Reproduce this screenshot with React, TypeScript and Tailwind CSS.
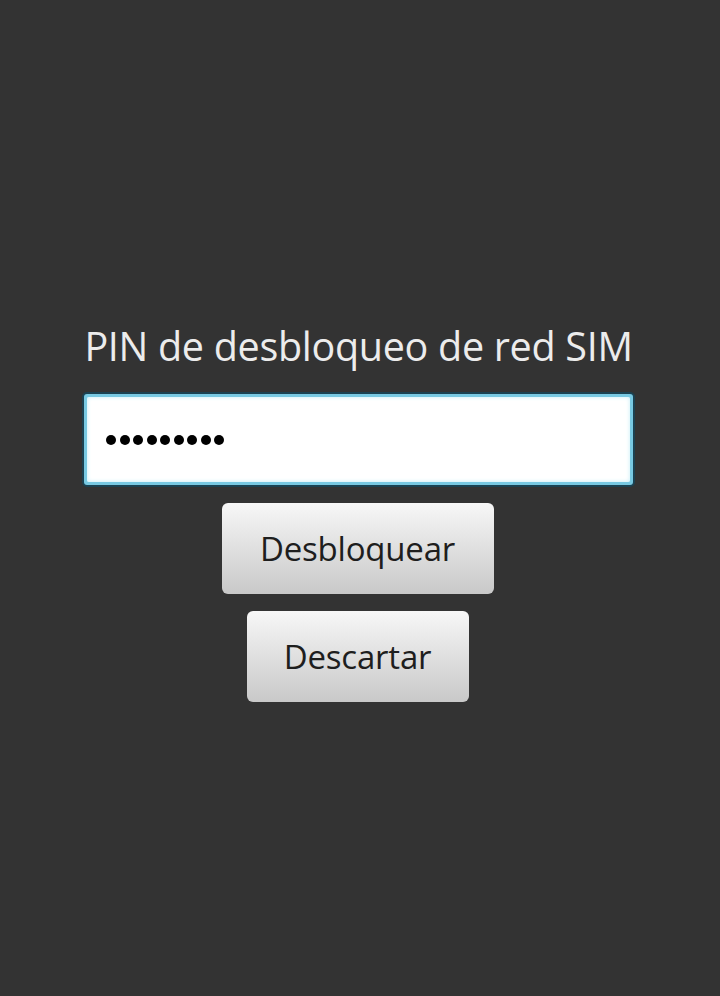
export default function App() {
  return (
    <div
      className="w-[720px] h-[996px] bg-[#333333] flex flex-col items-center pt-[322px]"
      style={{ fontFamily: '"Open Sans", "Noto Sans", sans-serif' }}
    >
      <div className="text-[39.5px] leading-[48px] text-[#ececec] tracking-[-0.3px] -ml-[3px]">PIN de desbloqueo de red SIM</div>
      <div className="mt-[22px] -ml-[3px] w-[553px] h-[95px] rounded-[5px] bg-[#1b4252] p-[2px]">
        <div className="w-full h-full rounded-[3px] bg-[#78c9e2] p-[3px]">
          <div className="w-full h-full rounded-[2px] bg-white shadow-[inset_0_0_4px_#c4eef8] flex items-center pl-[19px]">
            <div className="flex gap-[3.5px]">
              {Array.from({ length: 9 }).map((_, i) => (
                <span key={i} className="w-[10px] h-[10px] rounded-full bg-black" />
              ))}
            </div>
          </div>
        </div>
      </div>
      <button className="mt-[16px] -ml-[5px] w-[272px] h-[91px] rounded-[6px] bg-gradient-to-b from-[#f7f7f7] to-[#c9c9c9] text-[33px] text-[#1e1e1e] tracking-[-0.2px]">
        Desbloquear
      </button>
      <button className="mt-[17px] -ml-[5px] w-[222px] h-[91px] rounded-[6px] bg-gradient-to-b from-[#f7f7f7] to-[#c9c9c9] text-[33px] text-[#1e1e1e] tracking-[-0.2px]">
        Descartar
      </button>
    </div>
  );
}
